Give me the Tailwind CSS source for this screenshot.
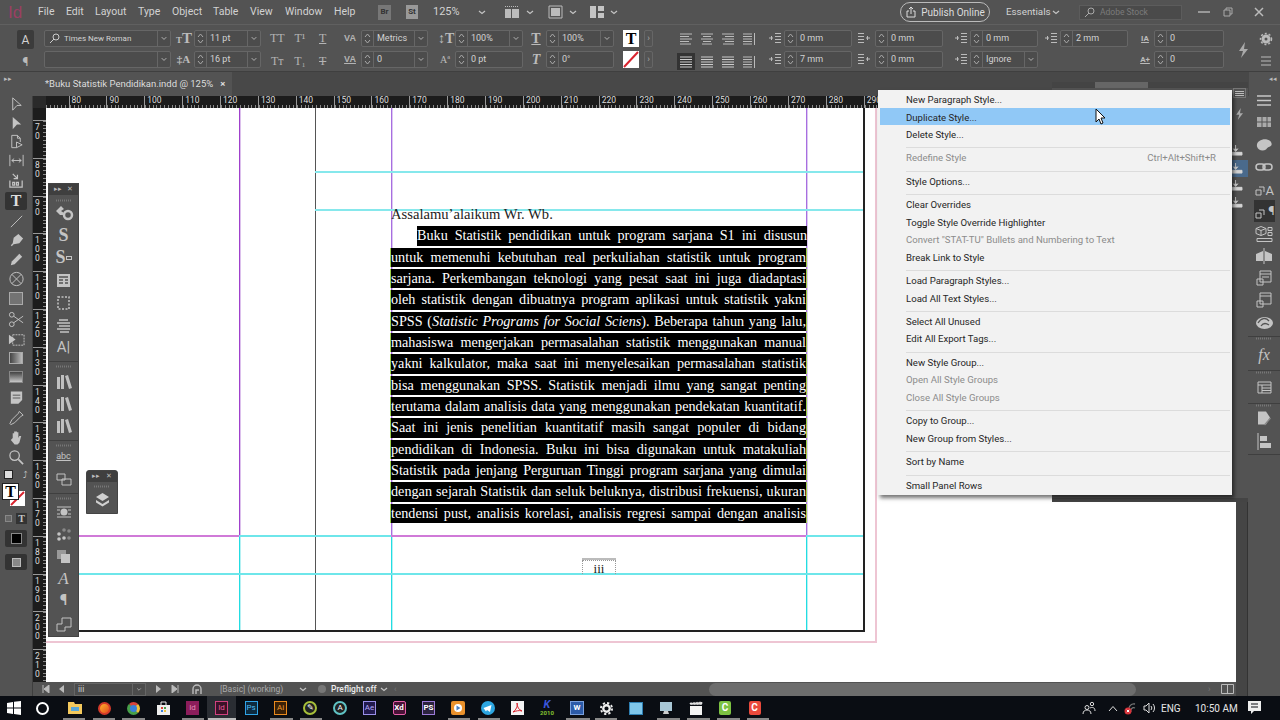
<!DOCTYPE html>
<html lang="en">
<head>
<meta charset="UTF-8">
<title>Adobe InDesign - Buku Statistik Pendidikan</title>
<script src="https://cdn.jsdelivr.net/npm/@tailwindcss/browser@4"></script>
</head>
<body class="w-[1280px] h-[720px] overflow-hidden relative flex flex-col bg-white font-['Roboto',sans-serif] text-[#d2d2d2]">

<!-- icon sprites -->
<svg class="hidden">
  <symbol id="spin" viewBox="0 0 11 15"><path d="M3 6l2.5-3L8 6M3 9l2.5 3L8 9" fill="none" stroke="#aaa"/></symbol>
  <symbol id="dd" viewBox="0 0 13 15"><path d="M4 6l2.5 2.5L9 6" fill="none" stroke="#bbb"/></symbol>
  <symbol id="chev" viewBox="0 0 10 10"><path d="M2 4l3 2.5L8 4" fill="none" stroke="#c4c4c4" stroke-width="1.2"/></symbol>
  <symbol id="al1" viewBox="0 0 14 12"><path d="M1 1h12M1 3.5h9M1 6h12M1 8.5h9M1 11h11" stroke="#bbb"/></symbol>
  <symbol id="al2" viewBox="0 0 14 12"><path d="M1 1h12M3 3.5h8M1 6h12M3 8.5h8M2 11h10" stroke="#bbb"/></symbol>
  <symbol id="al3" viewBox="0 0 14 12"><path d="M1 1h12M4 3.5h9M1 6h12M4 8.5h9M2 11h11" stroke="#bbb"/></symbol>
  <symbol id="al4" viewBox="0 0 14 12"><path d="M1 1h9M1 3.5h9M1 6h9M1 8.5h9M1 11h9M12.5 0v12" stroke="#bbb"/></symbol>
  <symbol id="jf" viewBox="0 0 14 12"><path d="M1 1h12M1 3.5h12M1 6h12M1 8.5h12M1 11h12" stroke="#ccc"/></symbol>
  <symbol id="ind" viewBox="0 0 14 14"><path d="M7 2h6M7 5h6M7 8h6M7 11h6M1 6.5h4M3.5 4.5v4" stroke="#bbb" fill="none"/></symbol>
  <symbol id="book" viewBox="0 0 18 18"><path d="M2 4h3v12H2zM6 2h3v14H6zM10 3l3-1 4 13-3 1z" fill="#c0c0c0"/></symbol>
  <symbol id="dl" viewBox="0 0 14 12"><path d="M6 0v6M3.5 4L6 7l2.500-3M1 8h12v3H1z" fill="#d4d4d4" stroke="#d4d4d4"/></symbol>
  <symbol id="grip" viewBox="0 0 18 3"><path d="M1 1.500h16" stroke="#777" stroke-width="2" stroke-dasharray="1 1"/></symbol>
  <symbol id="styl" viewBox="0 0 18 18"><path d="M2 11h5v5H2zM5 8h5v5" fill="none" stroke="#c4c4c4"/></symbol>
</svg>

<!-- menu bar -->
<header class="h-6 shrink-0 bg-[#535353] flex items-center text-[10.500px] relative">
  <span class="ml-[8px] w-[13px] text-[17px] leading-none text-[#9b3f63] font-['Liberation_Sans',sans-serif]">Id</span>
  <nav class="flex ml-[17px]">
    <span class="w-[28px]">File</span><span class="w-[29px]">Edit</span><span class="w-[43px]">Layout</span><span class="w-[34px]">Type</span><span class="w-[41px]">Object</span><span class="w-[37px]">Table</span><span class="w-[35px]">View</span><span class="w-[49px]">Window</span><span class="w-[30px]">Help</span>
  </nav>
  <span class="ml-[14px] w-[13px] h-[15px] bg-[#777] text-[#333] text-[8px] font-bold flex items-center justify-center">Br</span>
  <span class="ml-[15px] w-[12px] h-[14px] bg-[#999] text-[#333] text-[8px] font-bold flex items-center justify-center">St</span>
  <span class="ml-[15px] w-[34px] text-[11px]">125%</span>
  <svg class="ml-[10px] w-[10px] h-[10px]"><use href="#chev"/></svg>
  <svg class="ml-[17px] w-[16px] h-[14px]" viewBox="0 0 16 14"><path d="M1 1.500h14" stroke="#bbb" stroke-dasharray="1 1"/><path d="M1 4h6v9H1zM8 4h7v9H8z" fill="#bbb"/></svg>
  <svg class="ml-[5px] w-[10px] h-[10px]"><use href="#chev"/></svg>
  <svg class="ml-[13px] w-[15px] h-[14px]" viewBox="0 0 15 14"><path d="M1 1h13v12H1z" fill="none" stroke="#bbb"/><path d="M3 3h9v8H3z" fill="#bbb"/></svg>
  <svg class="ml-[5px] w-[10px] h-[10px]"><use href="#chev"/></svg>
  <svg class="ml-[12px] w-[14px] h-[12px]" viewBox="0 0 14 12"><path d="M0 0h6v12H0zM8 0h6v5H8zM8 7h6v5H8z" fill="#c4c4c4"/></svg>
  <svg class="ml-[5px] w-[10px] h-[10px]"><use href="#chev"/></svg>
  <div class="ml-[281px] w-[90px] h-[20px] rounded-full border border-[#bbb] flex items-center justify-center gap-[4px] text-[10px] text-[#ddd]">
    <svg class="w-[12px] h-[12px]" viewBox="0 0 12 12"><path d="M4 5H2v6h8V5H8M6 8V1M4 3l2-2 2 2" fill="none" stroke="#ddd"/></svg>Publish Online
  </div>
  <span class="ml-[16px] text-[9.800px] w-[42px]">Essentials</span>
  <svg class="ml-[3px] w-[10px] h-[10px]"><use href="#chev"/></svg>
  <div class="ml-[18px] w-[103px] h-[15px] bg-[#4a4a4a] border border-[#5c5c5c] flex items-center pl-[4px] gap-[3px] text-[8.500px] text-[#7b7b7b]">
    <svg class="w-[13px] h-[11px]" viewBox="0 0 13 11"><circle cx="7" cy="4" r="3" fill="none" stroke="#aaa"/><path d="M5 6l-4 4" stroke="#aaa"/></svg>Adobe Stock
  </div>
  <div class="ml-[16px] w-[12px] h-[2px] bg-[#999]"></div>
  <svg class="ml-[13px] w-[10px] h-[10px]" viewBox="0 0 10 10"><path d="M1 3h6v6H1zM3 3V1h6v6H7" fill="none" stroke="#aaa"/></svg>
  <svg class="ml-[21px] w-[10px] h-[10px]" viewBox="0 0 10 10"><path d="M1 1l8 8M9 1l-8 8" stroke="#bbb" stroke-width="1.500"/></svg>
</header>

<!-- control panel -->
<section class="h-12 shrink-0 bg-[#535353] border-t border-[#606060] border-b-[#3f3f3f] border-b flex pl-[17px] pt-[5px] text-[9px]">
  <div class="w-[17px] flex flex-col gap-[4px]">
    <span class="h-[19px] bg-[#3b3b3b] rounded-[2px] flex items-center justify-center text-[12px]">A</span>
    <span class="h-[17px] flex items-center justify-center text-[12px] text-[#bbb]">¶</span>
  </div>
  <div class="ml-[10px] w-[127px] flex flex-col gap-[4px]">
    <div class="flex h-[17px] items-center rounded-[2px] border border-[#666] bg-[#4c4c4c] pl-[3px]">
      <svg class="w-[14px] h-[11px] shrink-0" viewBox="0 0 14 11"><circle cx="8" cy="4" r="3" fill="none" stroke="#ccc"/><path d="M6 6l-4 4" stroke="#ccc"/></svg>
      <span class="flex-1 pl-[2px] text-[8px]">Times New Roman</span>
      <svg class="w-[13px] h-[15px] border-l border-[#666]"><use href="#dd"/></svg>
    </div>
    <div class="flex h-[17px] items-center justify-end rounded-[2px] border border-[#666] bg-[#4c4c4c]">
      <svg class="w-[13px] h-[15px] border-l border-[#666]"><use href="#dd"/></svg>
    </div>
  </div>
  <div class="ml-[5px] w-[15px] flex flex-col gap-[4px] font-['Liberation_Serif',serif] font-bold leading-[17px] text-center text-[#bbb]">
    <span class="h-[17px] text-[15px] whitespace-nowrap"><span class="text-[9px]">T</span>T</span><span class="h-[17px] text-[11px]">‡A</span>
  </div>
  <div class="ml-[3px] w-[67px] flex flex-col gap-[4px]">
    <div class="flex h-[17px] items-center rounded-[2px] border border-[#666] bg-[#4c4c4c]"><svg class="w-[11px] h-[15px] shrink-0"><use href="#spin"/></svg><span class="flex-1 pl-[3px] border-l border-[#666] leading-[15px]">11 pt</span><svg class="w-[13px] h-[15px] border-l border-[#666]"><use href="#dd"/></svg></div>
    <div class="flex h-[17px] items-center rounded-[2px] border border-[#666] bg-[#4c4c4c]"><svg class="w-[11px] h-[15px] shrink-0"><use href="#spin"/></svg><span class="flex-1 pl-[3px] border-l border-[#666] leading-[15px]">16 pt</span><svg class="w-[13px] h-[15px] border-l border-[#666]"><use href="#dd"/></svg></div>
  </div>
  <div class="ml-[5px] w-[68px] grid grid-cols-3 grid-rows-2 gap-y-[4px] font-['Liberation_Serif',serif] text-[12px] leading-[17px] text-center text-[#b4b4b4]">
    <span>TT</span><span>T¹</span><span class="underline">T</span><span>Tт</span><span>T₁</span><span class="line-through">T</span>
  </div>
  <div class="ml-[9px] w-[14px] flex flex-col gap-[4px] font-['Liberation_Sans',sans-serif] text-[9px] font-bold leading-[17px] text-center text-[#b4b4b4]">
    <span class="h-[17px]">VA</span><span class="h-[17px] underline">VA</span>
  </div>
  <div class="ml-[4px] w-[67px] flex flex-col gap-[4px]">
    <div class="flex h-[17px] items-center rounded-[2px] border border-[#666] bg-[#4c4c4c]"><svg class="w-[11px] h-[15px] shrink-0"><use href="#spin"/></svg><span class="flex-1 pl-[3px] border-l border-[#666] leading-[15px]">Metrics</span><svg class="w-[13px] h-[15px] border-l border-[#666]"><use href="#dd"/></svg></div>
    <div class="flex h-[17px] items-center rounded-[2px] border border-[#666] bg-[#4c4c4c]"><svg class="w-[11px] h-[15px] shrink-0"><use href="#spin"/></svg><span class="flex-1 pl-[3px] border-l border-[#666] leading-[15px]">0</span><svg class="w-[13px] h-[15px] border-l border-[#666]"><use href="#dd"/></svg></div>
  </div>
  <div class="ml-[10px] w-[14px] flex flex-col gap-[4px] font-['Liberation_Serif',serif] text-[14px] leading-[17px] text-center text-[#bbb]">
    <span class="h-[17px] font-bold whitespace-nowrap">↕T</span><span class="h-[17px] text-[10px]">Aª</span>
  </div>
  <div class="ml-[3px] w-[68px] flex flex-col gap-[4px]">
    <div class="flex h-[17px] items-center rounded-[2px] border border-[#666] bg-[#4c4c4c]"><svg class="w-[11px] h-[15px] shrink-0"><use href="#spin"/></svg><span class="flex-1 pl-[3px] border-l border-[#666] leading-[15px]">100%</span><svg class="w-[13px] h-[15px] border-l border-[#666]"><use href="#dd"/></svg></div>
    <div class="flex h-[17px] items-center rounded-[2px] border border-[#666] bg-[#4c4c4c]"><svg class="w-[11px] h-[15px] shrink-0"><use href="#spin"/></svg><span class="flex-1 pl-[3px] border-l border-[#666] leading-[15px]">0 pt</span></div>
  </div>
  <div class="ml-[6px] w-[14px] flex flex-col gap-[4px] font-['Liberation_Serif',serif] text-[14px] leading-[17px] text-center text-[#bbb] font-bold">
    <span class="h-[17px] underline">T</span><span class="h-[17px] italic">T</span>
  </div>
  <div class="ml-[3px] w-[68px] flex flex-col gap-[4px]">
    <div class="flex h-[17px] items-center rounded-[2px] border border-[#666] bg-[#4c4c4c]"><svg class="w-[11px] h-[15px] shrink-0"><use href="#spin"/></svg><span class="flex-1 pl-[3px] border-l border-[#666] leading-[15px]">100%</span><svg class="w-[13px] h-[15px] border-l border-[#666]"><use href="#dd"/></svg></div>
    <div class="flex h-[17px] items-center rounded-[2px] border border-[#666] bg-[#4c4c4c]"><svg class="w-[11px] h-[15px] shrink-0"><use href="#spin"/></svg><span class="flex-1 pl-[3px] border-l border-[#666] leading-[15px]">0°</span></div>
  </div>
  <div class="ml-[9px] w-[16px] flex flex-col gap-[4px]">
    <span class="h-[17px] bg-white text-black font-['Liberation_Serif',serif] font-bold text-[16px] leading-[17px] text-center">T</span>
    <svg class="h-[17px] w-[16px]" viewBox="0 0 16 17"><path d="M0 0h16v17H0z" fill="#fff"/><path d="M1 16L15 1" stroke="#d9232e" stroke-width="2"/></svg>
  </div>
  <div class="ml-[5px] w-[9px] flex flex-col gap-[4px] text-[#aaa] text-center leading-[17px]">
    <span class="h-[17px] border border-[#666] rounded-[2px] leading-[14px]">›</span><span class="h-[17px] border border-[#666] rounded-[2px] leading-[14px]">›</span>
  </div>
  <div class="ml-[22px] w-[84px] grid grid-cols-4 grid-rows-2 gap-y-[4px] place-items-center">
    <svg class="w-[14px] h-[12px] my-[2.500px]"><use href="#al1"/></svg><svg class="w-[14px] h-[12px]"><use href="#al2"/></svg><svg class="w-[14px] h-[12px]"><use href="#al3"/></svg><svg class="w-[14px] h-[12px]"><use href="#al4"/></svg>
    <div class="w-[18px] h-[17px] bg-[#333] flex items-center justify-center"><svg class="w-[14px] h-[12px]"><use href="#jf"/></svg></div><svg class="w-[14px] h-[12px]"><use href="#jf"/></svg><svg class="w-[14px] h-[12px]"><use href="#jf"/></svg><svg class="w-[14px] h-[12px]"><use href="#al4"/></svg>
  </div>
  <div class="ml-[9px] w-[12px] flex flex-col gap-[4px]">
    <svg class="w-[14px] h-[17px]"><use href="#ind"/></svg><svg class="w-[14px] h-[17px]"><use href="#ind"/></svg>
  </div>
  <div class="ml-[4px] w-[68px] flex flex-col gap-[4px]">
    <div class="flex h-[17px] items-center rounded-[2px] border border-[#666] bg-[#4c4c4c]"><svg class="w-[11px] h-[15px] shrink-0"><use href="#spin"/></svg><span class="flex-1 pl-[3px] border-l border-[#666] leading-[15px]">0 mm</span></div>
    <div class="flex h-[17px] items-center rounded-[2px] border border-[#666] bg-[#4c4c4c]"><svg class="w-[11px] h-[15px] shrink-0"><use href="#spin"/></svg><span class="flex-1 pl-[3px] border-l border-[#666] leading-[15px]">7 mm</span></div>
  </div>
  <div class="ml-[5px] w-[13px] flex flex-col gap-[4px]">
    <svg class="w-[14px] h-[17px] -scale-x-100"><use href="#ind"/></svg><svg class="w-[14px] h-[17px] -scale-x-100"><use href="#ind"/></svg>
  </div>
  <div class="ml-[5px] w-[68px] flex flex-col gap-[4px]">
    <div class="flex h-[17px] items-center rounded-[2px] border border-[#666] bg-[#4c4c4c]"><svg class="w-[11px] h-[15px] shrink-0"><use href="#spin"/></svg><span class="flex-1 pl-[3px] border-l border-[#666] leading-[15px]">0 mm</span></div>
    <div class="flex h-[17px] items-center rounded-[2px] border border-[#666] bg-[#4c4c4c]"><svg class="w-[11px] h-[15px] shrink-0"><use href="#spin"/></svg><span class="flex-1 pl-[3px] border-l border-[#666] leading-[15px]">0 mm</span></div>
  </div>
  <div class="ml-[11px] w-[13px] flex flex-col gap-[4px]">
    <svg class="w-[14px] h-[17px]"><use href="#ind"/></svg><svg class="w-[14px] h-[17px]"><use href="#ind"/></svg>
  </div>
  <div class="ml-[3px] w-[68px] flex flex-col gap-[4px]">
    <div class="flex h-[17px] items-center rounded-[2px] border border-[#666] bg-[#4c4c4c]"><svg class="w-[11px] h-[15px] shrink-0"><use href="#spin"/></svg><span class="flex-1 pl-[3px] border-l border-[#666] leading-[15px]">0 mm</span></div>
    <div class="flex h-[17px] items-center rounded-[2px] border border-[#666] bg-[#4c4c4c]"><svg class="w-[11px] h-[15px] shrink-0"><use href="#spin"/></svg><span class="flex-1 pl-[3px] border-l border-[#666] leading-[15px]">Ignore</span><svg class="w-[13px] h-[15px] border-l border-[#666]"><use href="#dd"/></svg></div>
  </div>
  <div class="ml-[6px] w-[12px] flex flex-col gap-[4px]">
    <svg class="w-[14px] h-[17px]"><use href="#ind"/></svg>
  </div>
  <div class="ml-[4px] w-[68px] flex flex-col gap-[4px]">
    <div class="flex h-[17px] items-center rounded-[2px] border border-[#666] bg-[#4c4c4c]"><svg class="w-[11px] h-[15px] shrink-0"><use href="#spin"/></svg><span class="flex-1 pl-[3px] border-l border-[#666] leading-[15px]">2 mm</span></div>
  </div>
  <div class="ml-[11px] w-[12px] flex flex-col gap-[4px] text-[8px] font-bold leading-[17px] text-[#bbb] text-center">
    <span class="h-[17px] underline">IA</span><span class="h-[17px] underline">A+</span>
  </div>
  <div class="ml-[3px] w-[70px] flex flex-col gap-[4px]">
    <div class="flex h-[17px] items-center rounded-[2px] border border-[#666] bg-[#4c4c4c]"><svg class="w-[11px] h-[15px] shrink-0"><use href="#spin"/></svg><span class="flex-1 pl-[3px] border-l border-[#666] leading-[15px]">0</span></div>
    <div class="flex h-[17px] items-center rounded-[2px] border border-[#666] bg-[#4c4c4c]"><svg class="w-[11px] h-[15px] shrink-0"><use href="#spin"/></svg><span class="flex-1 pl-[3px] border-l border-[#666] leading-[15px]">0</span></div>
  </div>
  <svg class="ml-[14px] mt-[12px] w-[12px] h-[16px]" viewBox="0 0 12 16"><path d="M7 0L1 9h4l-2 7 7-9H6z" fill="#aaa"/></svg>
  <div class="ml-[9px] w-[14px] flex flex-col gap-[8px] pt-[2px]">
    <svg class="w-[14px] h-[14px]" viewBox="0 0 14 14"><circle cx="7" cy="7" r="3" fill="none" stroke="#bbb" stroke-width="3"/><circle cx="7" cy="7" r="5.500" fill="none" stroke="#bbb" stroke-dasharray="2 2" stroke-width="1.500"/></svg>
    <svg class="w-[14px] h-[14px]" viewBox="0 0 14 14"><path d="M2 3h10M2 7h10M2 11h10" stroke="#bbb" stroke-width="1.200"/></svg>
  </div>
</section>

<!-- tab bar -->
<section class="h-6 shrink-0 bg-[#484848] flex text-[9px]">
  <div class="w-[33px] bg-[#535353] text-[7px] pl-[4px] text-[#bbb] leading-[14px]">▸▸</div>
  <div class="w-[199px] bg-[#535353] flex items-center pl-[12px] text-[9.500px] whitespace-nowrap text-[#dcdcdc]">*Buku Statistik Pendidikan.indd @ 125%<span class="ml-[7px] font-bold">×</span></div>
  <div class="ml-auto w-[31px] bg-[#535353] text-[7px] text-right pr-[3px] text-[#bbb] leading-[14px]">◂◂</div>
</section>

<!-- work area -->
<main class="h-[600px] shrink-0 flex relative">
  <!-- tools -->
  <aside class="w-[33px] shrink-0 bg-[#535353] border-r border-[#3e3e3e] flex flex-col items-center text-[#c4c4c4]">
    <svg class="w-[17px] h-[19px] mt-[-1px]" viewBox="0 0 18 18"><path d="M5 2l9 8H9.500L5 15z" fill="none" stroke="#c4c4c4"/></svg>
    <svg class="w-[17px] h-[19px]" viewBox="0 0 18 18"><path d="M5 2l9 8H9.500L5 15z" fill="#c4c4c4"/></svg>
    <svg class="w-[17px] h-[18px]" viewBox="0 0 18 18"><path d="M10 2H4v13h5M10 2l3 3v4M10 2v3h3M9 9l6 3-6 3z" fill="none" stroke="#c4c4c4"/></svg>
    <svg class="w-[17px] h-[19px]" viewBox="0 0 18 18"><path d="M2 3v12M16 3v12M4 9h10M4 9l2.500-2M4 9l2.500 2M14 9l-2.500-2M14 9l-2.500 2" fill="none" stroke="#c4c4c4"/></svg>
    <svg class="w-[17px] h-[21px]" viewBox="0 0 18 18"><path d="M2 9v7h13V9M5 11h2v3H5zM9 11h2v3H9zM5 2l5 5M10 3v4H6" fill="none" stroke="#c4c4c4" stroke-width="1.300"/></svg>
    <div class="w-[22px] h-[18px] mt-[1px] bg-[#333] rounded-[2px] text-center font-['Liberation_Serif',serif] font-bold text-[16px] leading-[18px] text-[#ddd]">T</div>
    <svg class="w-[17px] h-[19px] mt-[2px]" viewBox="0 0 18 18"><path d="M3 15L15 3" stroke="#c4c4c4"/></svg>
    <svg class="w-[17px] h-[19px]" viewBox="0 0 18 18"><path d="M11 2l5 5-4 5-6 1-2 2-1-1 2-2 1-6z" fill="#c4c4c4"/></svg>
    <svg class="w-[17px] h-[19px]" viewBox="0 0 18 18"><path d="M3 15l1-4 8-8 3 3-8 8z" fill="#c4c4c4"/></svg>
    <svg class="w-[17px] h-[20px]" viewBox="0 0 18 18"><circle cx="9" cy="9" r="7" fill="none" stroke="#c4c4c4"/><path d="M4 4l10 10M14 4L4 14" stroke="#c4c4c4"/></svg>
    <div class="w-[14px] h-[13px] my-[3px] bg-[#737373] border border-[#aaa]"></div>
    <svg class="w-[17px] h-[21px] mt-[1px]" viewBox="0 0 18 18"><circle cx="4" cy="4" r="2.500" fill="none" stroke="#c4c4c4"/><circle cx="4" cy="14" r="2.500" fill="none" stroke="#c4c4c4"/><path d="M6 5.500l10 7M6 12.500l10-7" stroke="#c4c4c4"/></svg>
    <svg class="w-[17px] h-[19px]" viewBox="0 0 18 18"><path d="M5 4h12v11H5z" fill="none" stroke="#c4c4c4" stroke-dasharray="2 1"/><path d="M1 4l7 5-7 5z" fill="#c4c4c4"/></svg>
    <div class="w-[14px] h-[12px] my-[3px] border border-[#aaa] bg-linear-to-r from-[#444] to-[#bbb]"></div>
    <div class="w-[14px] h-[12px] my-[4px] border border-[#888] bg-linear-to-b from-[#444] to-[#c8c8c8]"></div>
    <svg class="w-[17px] h-[20px] mt-[1px]" viewBox="0 0 18 18"><path d="M3 2h12v9l-4 4H3z" fill="#c4c4c4"/><path d="M5 6h8M5 9h8" stroke="#535353"/></svg>
    <svg class="w-[17px] h-[20px]" viewBox="0 0 18 18"><path d="M12 2l4 4-2 1-7 7-4 2-1-1 2-4 7-7z" fill="none" stroke="#c4c4c4"/></svg>
    <svg class="w-[17px] h-[20px]" viewBox="0 0 18 18"><path d="M5 9V4h1.500v4-6H8v6V2h1.500v6V3H11v6l1-2h2l-2 7-2 2H7l-4-5z" fill="#c4c4c4"/></svg>
    <svg class="w-[17px] h-[19px]" viewBox="0 0 18 18"><circle cx="7" cy="7" r="5" fill="none" stroke="#c4c4c4" stroke-width="1.300"/><path d="M11 11l5 5" stroke="#c4c4c4" stroke-width="1.800"/></svg>
    <div class="w-[24px] flex justify-between mt-[3px] text-[9px] leading-[11px]"><span class="w-[9px] h-[9px] bg-[#ddd] border border-[#222]"></span><span>⤴</span></div>
    <div class="w-[26px] h-[25px] relative mt-[2px]">
      <div class="absolute left-[-1px] top-0 w-[17px] h-[17px] bg-white border border-[#222] text-black font-['Liberation_Serif',serif] font-bold text-[16px] leading-[15px] text-center z-10">T</div>
      <svg class="absolute left-[7px] top-[8px] w-[15px] h-[15px]" viewBox="0 0 15 15"><path d="M0 0h15v15H0z" fill="#fff"/><path d="M1 14L14 1" stroke="#d9232e" stroke-width="2"/></svg>
    </div>
    <div class="flex gap-[4px] mt-[5px] items-center"><span class="w-[7px] h-[7px] bg-[#666] border border-[#888]"></span><span class="w-[11px] h-[11px] bg-[#333] text-[10px] leading-[11px] text-center font-['Liberation_Serif',serif] font-bold">T</span></div>
    <div class="w-[22px] h-[17px] mt-[6px] bg-[#333] rounded-[2px] flex items-center justify-center"><span class="w-[11px] h-[11px] bg-black border border-[#888]"></span></div>
    <div class="w-[22px] h-[16px] mt-[7px] bg-[#333] rounded-[2px] flex items-center justify-center"><span class="w-[9px] h-[9px] bg-[#888] border border-[#bbb]"></span></div>
  </aside>

  <!-- centre column -->
  <div class="w-[1203px] shrink-0 flex flex-col">
    <div id="hruler" class="h-3 shrink-0 bg-[#1c1c1c] flex text-[8.500px] text-[#ddd] overflow-hidden"></div>
    <div class="flex-1 flex min-h-0">
      <div id="vruler" class="w-[13px] shrink-0 bg-[#1c1c1c] flex flex-col text-[8.500px] text-[#ddd] overflow-hidden"></div>

      <!-- document canvas: coordinates below are pasteboard positions -->
      <div class="flex-1 relative bg-white overflow-hidden">
        <div class="absolute left-[193px] top-0 w-px h-[427px] bg-[#a040cc] shadow-[1px_0_0_#dcc0ec]"></div>
        <div class="absolute left-[193px] top-[427px] w-px h-[96px] bg-[#22dde2] shadow-[1px_0_0_#b5f1f3]"></div>
        <div class="absolute left-[269px] top-0 w-px h-[523px] bg-[#555]"></div>
        <div class="absolute left-[345px] top-0 w-px h-[427px] bg-[#a86ee0] shadow-[1px_0_0_#dcc8f2]"></div>
        <div class="absolute left-[345px] top-[427px] w-px h-[96px] bg-[#22dde2] shadow-[1px_0_0_#b5f1f3]"></div>
        <div class="absolute left-[760px] top-0 w-px h-[427px] bg-[#a86ee0] shadow-[1px_0_0_#dcc8f2]"></div>
        <div class="absolute left-[760px] top-[427px] w-px h-[96px] bg-[#22dde2] shadow-[1px_0_0_#b5f1f3]"></div>
        <div class="absolute left-[269px] top-[63px] w-[549px] h-[2px] bg-[#86e8ec]"></div>
        <div class="absolute left-[269px] top-[101px] w-[549px] h-[2px] bg-[#86e8ec]"></div>
        <div class="absolute left-[33px] top-[427px] w-[160px] h-[2px] bg-[#d07ad8]"></div>
        <div class="absolute left-[193px] top-[427px] w-[152px] h-[2px] bg-[#6ee6ea]"></div>
        <div class="absolute left-[345px] top-[427px] w-[415px] h-[2px] bg-[#d07ad8]"></div>
        <div class="absolute left-[760px] top-[427px] w-[58px] h-[2px] bg-[#6ee6ea]"></div>
        <div class="absolute left-[33px] top-[465px] w-[785px] h-[2px] bg-[#6ee6ea]"></div>
        <div class="absolute left-[817px] top-0 w-[2px] h-[524px] bg-[#222]"></div>
        <div class="absolute left-[2px] top-[522px] w-[817px] h-[2px] bg-[#222]"></div>
        <div class="absolute left-[829px] top-0 w-[2px] h-[534px] bg-[#eec5d3]"></div>
        <div class="absolute left-0 top-[533px] w-[831px] h-[2px] bg-[#eec5d3]"></div>

        <!-- text frame -->
        <article class="absolute left-[344px] top-[97px] w-[417px] flex flex-col font-['Liberation_Serif',serif] text-[14.200px] whitespace-nowrap [text-align:justify] [text-align-last:justify]">
          <p class="ml-px h-[19px] leading-[19px] text-[14.600px] text-[#222] [text-align-last:left]">Assalamu’alaikum Wr. Wb.</p>
          <p class="ml-[27px] mt-[2.300px] h-[19.500px] leading-[19.500px] bg-black text-white">Buku Statistik pendidikan untuk program sarjana S1 ini disusun</p>
          <p class="mt-[1.830px] h-[19.500px] leading-[19.500px] bg-black text-white border-x border-[#9ccf4a]">untuk memenuhi kebutuhan real perkuliahan statistik untuk program</p>
          <p class="mt-[1.830px] h-[19.500px] leading-[19.500px] bg-black text-white border-x border-[#9ccf4a]">sarjana. Perkembangan teknologi yang pesat saat ini juga diadaptasi</p>
          <p class="mt-[1.830px] h-[19.500px] leading-[19.500px] bg-black text-white border-x border-[#9ccf4a]">oleh statistik dengan dibuatnya program aplikasi untuk statistik yakni</p>
          <p class="mt-[1.830px] h-[19.500px] leading-[19.500px] bg-black text-white border-x border-[#9ccf4a]">SPSS (<i>Statistic Programs for Social Sciens</i>). Beberapa tahun yang lalu,</p>
          <p class="mt-[1.830px] h-[19.500px] leading-[19.500px] bg-black text-white border-x border-[#9ccf4a]">mahasiswa mengerjakan permasalahan statistik menggunakan manual</p>
          <p class="mt-[1.830px] h-[19.500px] leading-[19.500px] bg-black text-white border-x border-[#9ccf4a]">yakni kalkulator, maka saat ini menyelesaikan permasalahan statistik</p>
          <p class="mt-[1.830px] h-[19.500px] leading-[19.500px] bg-black text-white border-x border-[#9ccf4a]">bisa menggunakan SPSS. Statistik menjadi ilmu yang sangat penting</p>
          <p class="mt-[1.830px] h-[19.500px] leading-[19.500px] bg-black text-white border-x border-[#9ccf4a]">terutama dalam analisis data yang menggunakan pendekatan kuantitatif.</p>
          <p class="mt-[1.830px] h-[19.500px] leading-[19.500px] bg-black text-white border-x border-[#9ccf4a]">Saat ini jenis penelitian kuantitatif masih sangat populer di bidang</p>
          <p class="mt-[1.830px] h-[19.500px] leading-[19.500px] bg-black text-white border-x border-[#9ccf4a]">pendidikan di Indonesia. Buku ini bisa digunakan untuk matakuliah</p>
          <p class="mt-[1.830px] h-[19.500px] leading-[19.500px] bg-black text-white border-x border-[#9ccf4a]">Statistik pada jenjang Perguruan Tinggi program sarjana  yang dimulai</p>
          <p class="mt-[1.830px] h-[19.500px] leading-[19.500px] bg-black text-white border-x border-[#9ccf4a]">dengan sejarah Statistik dan seluk beluknya, distribusi frekuensi, ukuran</p>
          <p class="mt-[1.830px] h-[19.500px] leading-[19.500px] bg-black text-white border-x border-[#9ccf4a]">tendensi pust, analisis korelasi, analisis regresi sampai dengan analisis</p>
        </article>

        <!-- folio -->
        <div class="absolute left-[536px] top-[450px] w-[34px] h-[16px] border-t-2 border-[#bbb]">
          <div class="h-full border-x border-t border-dotted border-[#999] font-['Liberation_Serif',serif] text-[13px] leading-[15px] text-center text-[#222]">iii</div>
        </div>
      </div>
    </div>
    <!-- status bar -->
    <footer class="h-[14px] shrink-0 bg-[#535353] flex items-center text-[8.500px] text-[#aaa]">
      <div class="w-[676px] shrink-0 flex items-center">
        <svg class="ml-[9px] w-[8px] h-[8px]" viewBox="0 0 8 8"><path d="M1 0v8M7 0v8L2 4z" fill="#bbb" stroke="#bbb"/></svg>
        <svg class="ml-[9px] w-[5px] h-[8px]" viewBox="0 0 5 8"><path d="M5 0v8L0 4z" fill="#bbb"/></svg>
        <div class="ml-[10px] w-[72px] h-[13px] bg-[#4c4c4c] border border-[#666] flex items-center"><span class="flex-1 pl-[3px] text-[#ccc]">iii</span><svg class="w-[13px] h-[11px] border-l border-[#666]"><use href="#dd"/></svg></div>
        <svg class="ml-[10px] w-[5px] h-[8px]" viewBox="0 0 5 8"><path d="M0 0v8l5-4z" fill="#bbb"/></svg>
        <svg class="ml-[10px] w-[8px] h-[8px]" viewBox="0 0 8 8"><path d="M7 0v8M1 0v8l5-4z" fill="#bbb" stroke="#bbb"/></svg>
        <svg class="ml-[12px] w-[13px] h-[11px]" viewBox="0 0 13 11"><path d="M2 10V5a4 4 0 018 0v5M5 10V6h3" fill="none" stroke="#bbb" stroke-width="1.400"/></svg>
        <span class="ml-[16px] w-[78px] whitespace-nowrap">[Basic] (working)</span>
        <svg class="w-[10px] h-[10px]"><use href="#chev"/></svg>
        <span class="ml-[10px] w-[8px] h-[8px] rounded-full bg-[#777]"></span>
        <span class="ml-[5px] w-[46px] text-[#ececec] font-medium whitespace-nowrap">Preflight off</span>
        <svg class="ml-[2px] w-[10px] h-[10px]"><use href="#chev"/></svg>
        <span class="ml-[5px] text-[#777]">‹</span>
      </div>
      <div class="w-[427px] h-[13px] bg-[#6d6d6d] rounded-full"></div>
      <span class="ml-[72px] text-[#777]">›</span>
      <svg class="ml-[10px] w-[13px] h-[10px]" viewBox="0 0 13 10"><path d="M.5.500h12v9H.500zM6.500.500v9" fill="none" stroke="#bbb"/></svg>
    </footer>
  </div>

  <!-- collapsed panel column -->
  <div class="w-[12px] shrink-0 bg-[#454545] border-r border-[#333]"></div>

  <!-- right dock -->
  <aside class="w-[32px] shrink-0 bg-[#535353] flex flex-col items-center">
    <svg class="w-[16px] h-[13px] mt-[-2px] mb-[4px]" viewBox="0 0 16 13"><path d="M1 2h14M1 6.500h14M1 11h14" stroke="#c8c8c8" stroke-width="1.500"/></svg>
    <svg class="w-[18px] h-[22px]" viewBox="0 0 18 18"><path d="M2 4h14v10H2z" fill="#aaa"/><path d="M7 4v10M12 4v10M2 9h14" stroke="#535353"/></svg>
    <svg class="w-[18px] h-[23px]" viewBox="0 0 18 18"><path d="M2 11c-1-5 5-8 10-7 5 1 6 6 3 7-3 1-3 2-4 3-3 2-8 1-9-3z" fill="#c4c4c4"/></svg>
    <svg class="w-[18px] h-[22px]" viewBox="0 0 18 18"><rect x="1" y="6" width="9" height="6" rx="3" fill="none" stroke="#c4c4c4" stroke-width="1.500"/><rect x="8" y="6" width="9" height="6" rx="3" fill="none" stroke="#c4c4c4" stroke-width="1.500"/></svg>
    <div class="w-[20px] h-[22px] flex items-end justify-end text-[13px] leading-[19px] text-[#c4c4c4] relative"><svg class="absolute left-0 top-0 w-[18px] h-[20px]"><use href="#styl"/></svg>A</div>
    <div class="w-[21px] h-[22px] bg-[#333] flex items-center justify-end text-[13px] text-[#c4c4c4] relative"><svg class="absolute left-0 top-0 w-[18px] h-[22px]"><use href="#styl"/></svg>¶</div>
    <svg class="w-[18px] h-[23px]" viewBox="0 0 18 18"><path d="M6 2l5 2v5l-5 2-5-2V4zM1 4l5 2 5-2M6 6v5M13 3h4v3h-4zM13 8h4v3h-4zM2 14h15v3H2z" fill="none" stroke="#c4c4c4"/></svg>
    <svg class="w-[18px] h-[22px]" viewBox="0 0 18 18"><path d="M1 7l7-3v10H1zM10 4l7 3v7h-7z" fill="#c4c4c4"/><path d="M9 1v16" stroke="#c4c4c4"/></svg>
    <svg class="w-[18px] h-[22px]" viewBox="0 0 18 18"><path d="M5 2h11v11H5zM5 5h11M7 8h7M2 10h6v6H2z" fill="none" stroke="#c4c4c4"/></svg>
    <svg class="w-[18px] h-[22px]" viewBox="0 0 18 18"><path d="M5 2h11v11H5zM5 5h11M2 10h6v6H2z" fill="none" stroke="#c4c4c4"/></svg>
    <svg class="w-[19px] h-[22px]" viewBox="0 0 19 18"><ellipse cx="9.500" cy="10" rx="8.500" ry="6" fill="#c4c4c4"/><path d="M3 10c3-5 8-6 11-2M6 13c2-3 5-3 8-1" fill="none" stroke="#535353" stroke-width="1.300"/></svg>
    <div class="w-full border-t border-[#3f3f3f] mt-[3px] h-[6px] flex justify-center"><svg class="w-[18px] h-[3px]"><use href="#grip"/></svg></div>
    <span class="h-[26px] font-['Liberation_Serif',serif] italic text-[16px] leading-[26px] text-[#c4c4c4]">fx</span>
    <div class="w-full border-t border-[#3f3f3f] mt-[2px] h-[6px] flex justify-center"><svg class="w-[18px] h-[3px]"><use href="#grip"/></svg></div>
    <svg class="w-[15px] h-[20px] mt-[1px]" viewBox="0 0 15 14"><path d="M1 2h13v11H1zM1 5h13M5 5v8M5 8h9M5 10.500h9" fill="none" stroke="#c4c4c4"/></svg>
    <div class="w-full border-t border-[#3f3f3f] mt-[6px] h-[6px] flex justify-center"><svg class="w-[18px] h-[3px]"><use href="#grip"/></svg></div>
    <svg class="w-[16px] h-[19px]" viewBox="0 0 16 16"><path d="M2 1h8l4 6-4 7H2z" fill="#c4c4c4"/><path d="M8 14l6-7 1 1-6 7z" fill="#888"/></svg>
    <svg class="w-[15px] h-[19px] mt-[4px]" viewBox="0 0 15 19"><path d="M1 1v17" stroke="#c4c4c4"/><path d="M3 4h7v5H3zM3 11h11v5H3z" fill="#c4c4c4"/></svg>
    <div class="w-full border-t border-[#3f3f3f] mt-[3px]"></div>
  </aside>

  <!-- floating tool panel -->
  <div class="absolute left-[48px] top-[87px] w-[31px] h-[454px] bg-[#535353] border border-[#444] flex flex-col items-center">
    <div class="w-full h-[11px] bg-[#3f3f3f] flex justify-between px-[5px] text-[7px] leading-[11px] text-[#bbb]"><span>▸▸</span><span>✕</span></div>
    <svg class="w-[18px] h-[3px] mt-[4px]"><use href="#grip"/></svg>
    <svg class="w-[20px] h-[20px] mt-[1px]" viewBox="0 0 20 20"><path d="M2 8l5-5 3 3-3 2 3 2-1 2H6z" fill="#c4c4c4"/><circle cx="14" cy="12" r="4" fill="none" stroke="#c4c4c4" stroke-width="2.500"/></svg>
    <span class="h-[22px] mt-[1px] font-['Liberation_Serif',serif] font-bold text-[18px] leading-[22px] text-[#c4c4c4]">S</span>
    <span class="h-[23px] flex items-center font-['Liberation_Serif',serif] font-bold text-[18px] leading-[23px] text-[#c4c4c4]">S<span class="w-[6px] h-[4px] border border-[#c4c4c4]"></span></span>
    <svg class="w-[15px] h-[23px]" viewBox="0 0 15 23"><path d="M1 5h13v13H1z" fill="#c4c4c4"/><path d="M3 8h9M3 11h4M9 11h3M3 14h4M9 14h3" stroke="#535353" stroke-width="1.300"/></svg>
    <svg class="w-[15px] h-[22px]" viewBox="0 0 15 22"><path d="M2 5h11v12H2z" fill="none" stroke="#c4c4c4" stroke-dasharray="2 1.500" stroke-width="1.500"/></svg>
    <svg class="w-[15px] h-[23px]" viewBox="0 0 15 23"><path d="M3 6h9M1 9h13M3 12h11M1 15h13M4 18h9" stroke="#c4c4c4" stroke-width="1.400"/></svg>
    <span class="h-[20px] text-[15px] leading-[20px] text-[#c4c4c4]">A|</span>
    <div class="w-full border-t border-[#3f3f3f] mt-[4px]"></div>
    <svg class="w-[18px] h-[3px] mt-[3px]"><use href="#grip"/></svg>
    <svg class="w-[18px] h-[18px] mt-[5px]"><use href="#book"/></svg>
    <svg class="w-[18px] h-[18px] mt-[4px]"><use href="#book"/></svg>
    <svg class="w-[18px] h-[18px] mt-[4px]"><use href="#book"/></svg>
    <div class="w-full border-t border-[#3f3f3f] mt-[5px]"></div>
    <svg class="w-[18px] h-[3px] mt-[3px]"><use href="#grip"/></svg>
    <span class="h-[20px] mt-[2px] text-[9px] leading-[14px] text-[#c4c4c4] underline">abc</span>
    <svg class="w-[16px] h-[15px] mt-[3px]" viewBox="0 0 16 15"><path d="M1 2h8v6H1zM6 7h9v6H6z" fill="none" stroke="#c4c4c4"/></svg>
    <div class="w-full border-t border-[#3f3f3f] mt-[6px]"></div>
    <svg class="w-[18px] h-[3px] mt-[3px]"><use href="#grip"/></svg>
    <svg class="w-[16px] h-[12px] mt-[6px]" viewBox="0 0 16 12"><path d="M1 1h14M1 11h14M1 4h3M12 4h3M1 8h3M12 8h3" stroke="#c4c4c4"/><circle cx="8" cy="6" r="3.500" fill="#c4c4c4"/></svg>
    <svg class="w-[16px] h-[14px] mt-[10px]" viewBox="0 0 16 14"><circle cx="8" cy="2" r="1.800" fill="#888"/><circle cx="13" cy="3" r="1.800" fill="#888"/><circle cx="3" cy="6" r="1.800" fill="#c4c4c4"/><circle cx="3" cy="11" r="1.800" fill="#c4c4c4"/><circle cx="8" cy="10" r="1.800" fill="#c4c4c4"/><circle cx="13" cy="10" r="1.800" fill="#888"/></svg>
    <svg class="w-[15px] h-[15px] mt-[7px]" viewBox="0 0 15 15"><path d="M1 1h9v9H1z" fill="#999"/><path d="M5 5h9v9H5z" fill="#c4c4c4"/></svg>
    <span class="h-[22px] mt-[3px] font-['Liberation_Serif',serif] italic text-[17px] leading-[24px] text-[#c4c4c4]">A</span>
    <span class="h-[22px] text-[15px] font-bold leading-[22px] text-[#c4c4c4]">¶</span>
    <svg class="w-[16px] h-[16px] mt-[5px]" viewBox="0 0 16 16"><path d="M6 2h9v9H9v4H1V8h5z" fill="none" stroke="#c4c4c4"/></svg>
  </div>

  <!-- floating layers panel -->
  <div class="absolute left-[86px] top-[374px] w-[32px] h-[44px] bg-[#535353] border border-[#444] flex flex-col items-center rounded-t-[3px]">
    <div class="w-full h-[11px] bg-[#3f3f3f] flex justify-between px-[5px] text-[7px] leading-[11px] text-[#bbb]"><span>▸▸</span><span>✕</span></div>
    <svg class="w-[18px] h-[3px] mt-[3px]"><use href="#grip"/></svg>
    <svg class="w-[15px] h-[15px] mt-[4px]" viewBox="0 0 15 15"><path d="M7.500 1l6.500 4-6.500 4L1 5z" fill="#d0d0d0"/><path d="M1 8l6.500 4L14 8v2.500L7.500 14.500 1 10.500z" fill="#d0d0d0"/></svg>
  </div>

  <!-- tabbed panel under the menu -->
  <div class="absolute left-[1052px] top-[-14px] w-[196px] h-[420px] bg-[#535353] border-b-4 border-[#444]">
    <div class="h-[6px] bg-[#444]"><div class="ml-[43px] w-[53px] h-[6px] bg-[#666]"></div></div>
    <div class="absolute right-[2px] top-[6px] w-[13px] h-[10px] border border-[#777] flex flex-col justify-center gap-[1px] px-[1px]"><span class="h-px bg-[#bbb]"></span><span class="h-px bg-[#bbb]"></span><span class="h-px bg-[#bbb]"></span></div>
    <svg class="absolute right-[3px] top-[26px] w-[10px] h-[12px]" viewBox="0 0 12 16"><path d="M7 0L1 9h4l-2 7 7-9H6z" fill="#aaa"/></svg>
    <div class="absolute right-0 top-[61px] w-[16px] h-[15px] pt-[2px]"><svg class="-ml-[2px] w-[13px] h-[11px]"><use href="#dl"/></svg></div>
    <div class="absolute right-0 top-[78px] w-[16px] h-[17px] bg-[#4a6a8c] pt-[3px]"><svg class="-ml-[2px] w-[13px] h-[11px]"><use href="#dl"/></svg></div>
    <div class="absolute right-0 top-[96px] w-[16px] h-[15px] pt-[2px]"><svg class="-ml-[2px] w-[13px] h-[11px]"><use href="#dl"/></svg></div>
    <div class="absolute right-0 top-[113px] w-[16px] h-[15px] pt-[2px]"><svg class="-ml-[2px] w-[13px] h-[11px]"><use href="#dl"/></svg></div>
  </div>

  <!-- context menu -->
  <div class="absolute left-[878px] top-[-6px] w-[354px] bg-[#f2f2f2] shadow-[2px_3px_4px_rgba(0,0,0,.55)] text-[9.600px] text-[#262626] flex flex-col px-[2px]">
    <div class="h-[17.500px] leading-[19px] pl-[26px]">New Paragraph Style...</div>
    <div class="h-[17.500px] leading-[19px] pl-[26px] bg-[#90c8f6]">Duplicate Style...</div>
    <div class="h-[17.500px] leading-[19px] pl-[26px]">Delete Style...</div>
    <div class="h-[5.900px] ml-[26px] border-b border-[#dcdcdc]"></div>
    <div class="h-[17.500px] leading-[19px] pl-[26px] pr-[14px] text-[#8c8c8c] flex justify-between"><span>Redefine Style</span><span>Ctrl+Alt+Shift+R</span></div>
    <div class="h-[5.900px] ml-[26px] border-b border-[#dcdcdc]"></div>
    <div class="h-[17.500px] leading-[19px] pl-[26px]">Style Options...</div>
    <div class="h-[5.900px] ml-[26px] border-b border-[#dcdcdc]"></div>
    <div class="h-[17.500px] leading-[19px] pl-[26px]">Clear Overrides</div>
    <div class="h-[17.500px] leading-[19px] pl-[26px]">Toggle Style Override Highlighter</div>
    <div class="h-[17.500px] leading-[19px] pl-[26px] text-[#8c8c8c]">Convert "STAT-TU" Bullets and Numbering to Text</div>
    <div class="h-[17.500px] leading-[19px] pl-[26px]">Break Link to Style</div>
    <div class="h-[5.900px] ml-[26px] border-b border-[#dcdcdc]"></div>
    <div class="h-[17.500px] leading-[19px] pl-[26px]">Load Paragraph Styles...</div>
    <div class="h-[17.500px] leading-[19px] pl-[26px]">Load All Text Styles...</div>
    <div class="h-[5.900px] ml-[26px] border-b border-[#dcdcdc]"></div>
    <div class="h-[17.500px] leading-[19px] pl-[26px]">Select All Unused</div>
    <div class="h-[17.500px] leading-[19px] pl-[26px]">Edit All Export Tags...</div>
    <div class="h-[5.900px] ml-[26px] border-b border-[#dcdcdc]"></div>
    <div class="h-[17.500px] leading-[19px] pl-[26px]">New Style Group...</div>
    <div class="h-[17.500px] leading-[19px] pl-[26px] text-[#8c8c8c]">Open All Style Groups</div>
    <div class="h-[17.500px] leading-[19px] pl-[26px] text-[#8c8c8c]">Close All Style Groups</div>
    <div class="h-[5.900px] ml-[26px] border-b border-[#dcdcdc]"></div>
    <div class="h-[17.500px] leading-[19px] pl-[26px]">Copy to Group...</div>
    <div class="h-[17.500px] leading-[19px] pl-[26px]">New Group from Styles...</div>
    <div class="h-[5.900px] ml-[26px] border-b border-[#dcdcdc]"></div>
    <div class="h-[17.500px] leading-[19px] pl-[26px]">Sort by Name</div>
    <div class="h-[5.900px] ml-[26px] border-b border-[#dcdcdc]"></div>
    <div class="h-[17.500px] leading-[19px] pl-[26px]">Small Panel Rows</div>
    <div class="h-[2px]"></div>
  </div>

  <!-- mouse pointer -->
  <svg class="absolute left-[1095px] top-[12px] w-[11px] h-[17px]" viewBox="0 0 11 17"><path d="M1 1v13l3-3 2 5 2-1-2-5h4z" fill="#fff" stroke="#111"/></svg>
</main>

<!-- windows taskbar -->
<footer class="h-6 shrink-0 bg-[#0a0d13] flex items-center relative text-[#e6e6e6]">
  <svg class="ml-[7px] w-[14px] h-[14px]" viewBox="0 0 14 14"><path d="M0 2l6-1v5.500H0zM7 .800L14 0v6.500H7zM0 7.500h6V13l-6-1zM7 7.500h7V14l-7-1z" fill="#fff"/></svg>
  <span class="ml-[15px] w-[13px] h-[13px] rounded-full border-2 border-white"></span>
  <div class="ml-[11px] flex items-center">
    <div class="w-[30px] flex justify-center"><svg class="w-[14px] h-[12px]" viewBox="0 0 14 12"><path d="M0 0h6l1 2h7v10H0z" fill="#f4c95d"/><path d="M3 5h8v4H3z" fill="#5aa7d9"/></svg></div>
    <div class="w-[29px] flex justify-center"><span class="w-[13px] h-[13px] rounded-full bg-linear-to-br from-[#ffb12a] to-[#e2471f] border-2 border-[#d43a2a]"></span></div>
    <div class="w-[29px] flex justify-center"><span class="w-[13px] h-[13px] rounded-full border-[3px] border-[#47a04a] border-t-[#d9443a] border-r-[#f0c23c] bg-[#3a80d9]"></span></div>
    <div class="w-[30px] flex justify-center"><svg class="w-[13px] h-[14px]" viewBox="0 0 13 14"><path d="M0 4h13v10H0z" fill="#eee"/><path d="M4 4V1h5v3" fill="none" stroke="#eee"/><path d="M4 6h2v2H4z" fill="#d9443a"/><path d="M7 6h2v2H7z" fill="#47a04a"/><path d="M4 9h2v2H4z" fill="#3a80d9"/><path d="M7 9h2v2H7z" fill="#f0c23c"/></svg></div>
    <div class="w-[29px] flex justify-center"><span class="w-[13px] h-[14px] bg-[#8c1d5b] text-[#e28ab8] text-[8px] leading-[14px] text-center">Id</span></div>
    <div class="w-[29px] h-6 bg-[#2a2d33] flex justify-center items-center"><span class="w-[13px] h-[14px] border border-[#d1417f] bg-[#3c1228] text-[#e9589a] text-[8px] leading-[12px] text-center">Id</span></div>
    <div class="w-[30px] flex justify-center"><span class="w-[13px] h-[14px] border border-[#2fa3e6] bg-[#0d2a3e] text-[#4fbdf5] text-[8px] leading-[12px] text-center">Ps</span></div>
    <div class="w-[29px] flex justify-center"><span class="w-[13px] h-[14px] border border-[#e98a1e] bg-[#3a2006] text-[#f29a30] text-[8px] leading-[12px] text-center">Ai</span></div>
    <div class="w-[30px] flex justify-center"><span class="w-[14px] h-[14px] rounded-full border-2 border-[#a7bf3a] bg-[#222] text-white text-[8px] leading-[10px] text-center">✎</span></div>
    <div class="w-[30px] flex justify-center"><span class="w-[14px] h-[14px] rounded-full border-2 border-[#5fc2c4] bg-[#222] text-white text-[8px] leading-[10px] text-center">A</span></div>
    <div class="w-[29px] flex justify-center"><span class="w-[13px] h-[14px] border border-[#9a8fe8] bg-[#221a4d] text-[#b4a9f7] text-[8px] leading-[12px] text-center">Ae</span></div>
    <div class="w-[30px] flex justify-center"><span class="w-[13px] h-[14px] rounded-[2px] border border-[#e45ea8] bg-[#4a1237] text-white text-[8px] font-bold leading-[12px] text-center">Xd</span></div>
    <div class="w-[29px] flex justify-center"><span class="w-[13px] h-[14px] border border-[#9b7ad8] bg-[#2c2340] text-white text-[8px] font-bold leading-[12px] text-center">PS</span></div>
    <div class="w-[30px] flex justify-center"><svg class="w-[14px] h-[14px]" viewBox="0 0 14 14"><rect width="14" height="14" rx="2" fill="#e9912c"/><circle cx="7" cy="7" r="4" fill="#fff"/><path d="M5.500 4.500l4 2.500-4 2.500z" fill="#4a7fc1"/></svg></div>
    <div class="w-[30px] flex justify-center"><svg class="w-[14px] h-[14px]" viewBox="0 0 14 14"><circle cx="7" cy="7" r="7" fill="#2ca5e0"/><path d="M2.500 7l8-3-1.500 7-3-2-1 1.500z" fill="#fff"/></svg></div>
    <div class="w-[29px] flex justify-center"><svg class="w-[13px] h-[14px]" viewBox="0 0 13 14"><path d="M0 0h13v14H0z" fill="#f3f3f3"/><path d="M2 11c3-2 5-6 4-9 0 4 2 7 5 8-3-1-6 0-9 1z" fill="none" stroke="#d9232e"/></svg></div>
    <div class="w-[30px] flex flex-col items-center leading-[7px]"><span class="text-[11px] italic font-bold text-[#3a56d9] leading-[9px]">K</span><span class="text-[6px] font-bold text-[#84c331]">2010</span></div>
    <div class="w-[30px] flex justify-center"><span class="w-[14px] h-[14px] bg-[#2c5ba8] border border-[#7aa0dc] text-white text-[8px] font-bold leading-[12px] text-center">W</span></div>
    <div class="w-[29px] flex justify-center"><svg class="w-[13px] h-[13px]" viewBox="0 0 14 14"><circle cx="7" cy="7" r="3.500" fill="none" stroke="#eee" stroke-width="2.500"/><circle cx="7" cy="7" r="6" fill="none" stroke="#eee" stroke-dasharray="2.400 2.300" stroke-width="2"/></svg></div>
    <div class="w-[30px] flex justify-center"><span class="w-[14px] h-[13px] bg-[#7fc6ea] border border-[#2e7fb3]"></span></div>
    <div class="w-[30px] flex justify-center"><svg class="w-[14px] h-[14px]" viewBox="0 0 14 14"><path d="M1 1h12v9H1z" fill="#a9c7d6"/><path d="M5 10h4l1 3H4z" fill="#ccc"/></svg></div>
    <div class="w-[29px] flex justify-center"><svg class="w-[14px] h-[14px]" viewBox="0 0 14 14"><path d="M1 5h12v9H1z" fill="#f4f4f4"/><path d="M1 2l12-1v2.500H1z" fill="#ddd" stroke="#fff" stroke-dasharray="2 1" stroke-width=".5"/></svg></div>
    <div class="w-[30px] flex justify-center"><span class="w-[12px] h-[14px] rounded-[2px] bg-[#7cc242] text-white text-[10px] font-bold leading-[14px] text-center">C</span></div>
    <div class="w-[29px] flex justify-center"><span class="w-[12px] h-[14px] rounded-[2px] bg-[#ea4a3c] text-white text-[10px] font-bold leading-[14px] text-center">C</span></div>
  </div>
  <div class="ml-auto flex items-center text-[10px]">
    <svg class="w-[14px] h-[14px]" viewBox="0 0 14 14"><circle cx="5" cy="6.500" r="2" fill="none" stroke="#ddd"/><path d="M1 13c0-3 2-4 4-4s4 1 4 4" fill="none" stroke="#ddd"/><circle cx="10" cy="3" r="1.700" fill="none" stroke="#ddd"/><path d="M8 7c2-1 5-1 5 3" fill="none" stroke="#ddd"/></svg>
    <svg class="ml-[12px] w-[10px] h-[7px]" viewBox="0 0 10 7"><path d="M1 6l4-4.500L9 6" fill="none" stroke="#ddd"/></svg>
    <svg class="ml-[6px] w-[14px] h-[14px]" viewBox="0 0 14 14"><path d="M5 9a5 5 0 016-6M7 11a3 3 0 014-4" fill="none" stroke="#777" stroke-width="1.300"/><circle cx="4" cy="10" r="3.500" fill="#d9333a"/><path d="M2.800 8.800l2.400 2.400M5.200 8.800l-2.400 2.400" stroke="#fff"/></svg>
    <svg class="ml-[5px] w-[14px] h-[14px]" viewBox="0 0 14 14"><path d="M1 5h2l3-3v10L3 9H1z" fill="none" stroke="#ddd"/><path d="M8 5a3 3 0 010 4M10 3a6 6 0 010 8" fill="none" stroke="#ddd"/></svg>
    <span class="ml-[4px] w-[20px]">ENG</span>
    <span class="ml-[14px] w-[40px] whitespace-nowrap">10:50 AM</span>
    <svg class="ml-[13px] mr-[19px] w-[13px] h-[15px]" viewBox="0 0 13 15"><path d="M0 0h13v10H6l-3 3v-3H0z" fill="#eee"/><path d="M3 3h7M3 6h7" stroke="#0a0d13"/></svg>
  </div>
  <div class="absolute left-0 bottom-0 w-full h-[2px] flex">
    <span class="ml-[63px] w-[22px] bg-[#888]"></span><span class="ml-[8px] w-[22px] bg-[#888]"></span><span class="ml-[7px] w-[23px] bg-[#888]"></span><span class="ml-[37px] w-[22px] bg-[#888]"></span><span class="ml-[4px] w-[28px] bg-[#bbb]"></span><span class="ml-[34px] w-[23px] bg-[#888]"></span><span class="ml-[7px] w-[22px] bg-[#888]"></span><span class="ml-[126px] w-[22px] bg-[#888]"></span><span class="ml-[8px] w-[22px] bg-[#888]"></span><span class="ml-[66px] w-[24px] bg-[#888]"></span><span class="ml-[5px] w-[22px] bg-[#888]"></span><span class="ml-[40px] w-[23px] bg-[#888]"></span><span class="ml-[7px] w-[23px] bg-[#888]"></span><span class="ml-[7px] w-[23px] bg-[#888]"></span><span class="ml-[7px] w-[22px] bg-[#888]"></span>
  </div>
</footer>

<script>
  // rulers: one cell per 10 mm at 125%
  const ruler = document.getElementById('hruler');
  let html = `<div class="w-[13px] shrink-0 bg-[#2a2a2a]"></div><div class="w-[22.600px] shrink-0 flex flex-col justify-end"><div class="h-[3px] bg-[repeating-linear-gradient(90deg,#8a8a8a_0,#8a8a8a_1px,transparent_1px,transparent_3.787px)]"></div></div>`;
  for (let n = 80; n <= 290; n += 10) {
    html += `<div class="w-[37.870px] shrink-0 border-l border-[#999] flex flex-col justify-between pl-[2px] leading-[9px]"><span>${n}</span><div class="h-[3px] -ml-[2px] bg-[repeating-linear-gradient(90deg,#8a8a8a_0,#8a8a8a_1px,transparent_1px,transparent_3.787px)]"></div></div>`;
  }
  ruler.innerHTML = html;

  const vr = document.getElementById('vruler');
  html = `<div class="h-[12px] shrink-0"></div>`;
  for (let n = 70; n <= 210; n += 10) {
    const digits = String(n).split('').map(d => `<span class="block h-[9px]">${d}</span>`).join('');
    html += `<div class="h-[37.800px] shrink-0 border-t border-[#999] pt-[2px] pl-[2px] leading-[9px] bg-[repeating-linear-gradient(180deg,#8a8a8a_0,#8a8a8a_1px,transparent_1px,transparent_3.780px)] bg-[length:3px_100%] bg-no-repeat bg-right">${digits}</div>`;
  }
  vr.innerHTML = html;
</script>
</body>
</html>
